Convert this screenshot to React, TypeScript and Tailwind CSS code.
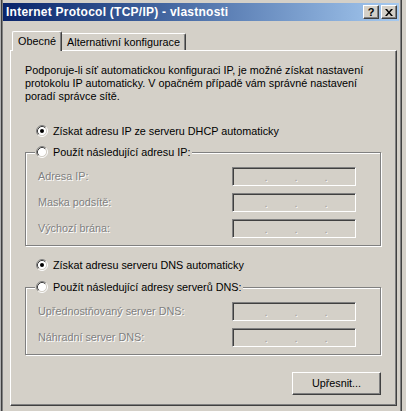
import React from 'react';

function Radio({ checked }: { checked?: boolean }) {
  return (
    <svg width="12" height="12" viewBox="0 0 12 12" className="shrink-0">
      <circle cx="6" cy="6" r="4.5" fill="#ffffff" />
      <path d="M2.11 9.89A5.5 5.5 0 0 1 9.89 2.11" fill="none" stroke="#808080" />
      <path d="M9.89 2.11A5.5 5.5 0 0 1 2.11 9.89" fill="none" stroke="#ffffff" />
      <path d="M2.82 9.18A4.5 4.5 0 0 1 9.18 2.82" fill="none" stroke="#404040" />
      <path d="M9.18 2.82A4.5 4.5 0 0 1 2.82 9.18" fill="none" stroke="#d4d0c8" />
      {checked && <circle cx="6" cy="6" r="2" fill="#000000" />}
    </svg>
  );
}

function IpField() {
  return (
    <div className="flex h-[19px] w-[124px] items-end pb-[2px] pl-[18px] border border-t-[#808080] border-l-[#808080] border-r-white border-b-white shadow-[inset_1px_1px_0_#404040] text-[#a0a0a0] [text-shadow:1px_1px_0_#fff] leading-[11px]">
      <span className="w-[30px] text-center">.</span>
      <span className="w-[30px] text-center">.</span>
      <span className="w-[30px] text-center">.</span>
    </div>
  );
}

function Row({ label }: { label: string }) {
  return (
    <div className="flex items-center justify-between">
      <span className="ml-[3px] text-[#808080] [text-shadow:1px_1px_0_#fff]">{label}</span>
      <IpField />
    </div>
  );
}

function Group({ title, rows }: { title: string; rows: string[] }) {
  return (
    <fieldset className="w-[356px] border border-[#808080] pl-[9px] pr-[24px] shadow-[inset_1px_1px_0_#fff,1px_1px_0_#fff]">
      <legend className="flex h-[14px] items-center gap-[5px] bg-[#d4d0c8] pl-[1px] pr-[2px]">
        <Radio />
        <span>{title}</span>
      </legend>
      <div className="flex flex-col gap-[7px] pt-[8px] pb-[7px]">
        {rows.map((r) => (
          <Row key={r} label={r} />
        ))}
      </div>
    </fieldset>
  );
}

export default function App() {
  return (
    <div className="flex h-[411px] w-[406px] overflow-hidden bg-[#d4d0c8] text-[10.8px] leading-[13px] text-black font-['Liberation_Sans',Arial,sans-serif]">
      <div className="flex h-full w-[3px]">
        <div className="w-px bg-[#b0b0b0]" />
        <div className="w-px bg-[#404040]" />
        <div className="w-px bg-[#808080]" />
      </div>

      <div className="flex h-full w-[399px] flex-col pt-[3px] border-r border-r-[#404040] shadow-[inset_-1px_0_0_#808080]">
        <div className="flex h-[18px] w-[396px] items-center justify-between bg-gradient-to-r from-[#0a246a] to-[#a6caf0] pl-[3px] pr-[2px]">
          <span className="font-bold text-white text-[12px] tracking-[0.25px]">Internet Protocol (TCP/IP) - vlastnosti</span>
          <div className="flex gap-[2px]">
            <div className="flex h-[14px] w-[16px] items-center justify-center bg-[#d4d0c8] border border-t-white border-l-white border-r-[#404040] border-b-[#404040] shadow-[inset_-1px_-1px_0_#808080] text-[11px] font-bold leading-none">
              ?
            </div>
            <div className="flex h-[14px] w-[16px] items-center justify-center bg-[#d4d0c8] border border-t-white border-l-white border-r-[#404040] border-b-[#404040] shadow-[inset_-1px_-1px_0_#808080]">
              <svg width="8" height="7" viewBox="0 0 8 7">
                <path d="M0 0L2 0L4 2.5L6 0L8 0L5 3.5L8 7L6 7L4 4.5L2 7L0 7L3 3.5Z" fill="#000" />
              </svg>
            </div>
          </div>
        </div>

        <div className="flex h-[19px] items-end mt-[10px] ml-[9px]">
          <div className="relative z-10 -mb-px flex h-[20px] w-[50px] items-center justify-center rounded-t-[2px] bg-[#d4d0c8] border-l border-t border-r border-l-white border-t-white border-r-[#404040] shadow-[inset_-1px_0_0_#808080] pb-[1px]">
            Obecné
          </div>
          <div className="flex h-[17px] w-[124px] items-center justify-center rounded-tr-[2px] border-t border-r border-t-white border-r-[#404040] shadow-[inset_-1px_0_0_#808080]">
            Alternativní konfigurace
          </div>
        </div>

        <div className="ml-[7px] flex h-[356px] w-[387px] flex-col border border-t-white border-l-white border-r-[#404040] border-b-[#404040] shadow-[inset_-1px_-1px_0_#808080] pl-[14px] pt-[13px]">
          <p className="whitespace-nowrap">
            Podporuje-li síť automatickou konfiguraci IP, je možné získat nastavení
            <br />
            protokolu IP automaticky. V opačném případě vám správné nastavení
            <br />
            poradí správce sítě.
          </p>

          <div className="mt-[21px] ml-[11px] flex h-[14px] items-center gap-[5px]">
            <Radio checked />
            <span>Získat adresu IP ze serveru DHCP automaticky</span>
          </div>

          <div className="mt-[7px]">
            <Group title="Použít následující adresu IP:" rows={['Adresa IP:', 'Maska podsítě:', 'Výchozí brána:']} />
          </div>

          <div className="mt-[12px] ml-[11px] flex h-[14px] items-center gap-[5px]">
            <Radio checked />
            <span>Získat adresu serveru DNS automaticky</span>
          </div>

          <div className="mt-[8px]">
            <Group title="Použít následující adresy serverů DNS:" rows={['Upřednostňovaný server DNS:', 'Náhradní server DNS:']} />
          </div>

          <div className="mt-[17px] flex w-[356px] justify-end">
            <div className="flex h-[23px] w-[89px] items-center justify-center bg-[#d4d0c8] border border-t-white border-l-white border-r-[#404040] border-b-[#404040] shadow-[inset_-1px_-1px_0_#808080]">
              Upřesnit...
            </div>
          </div>
        </div>
      </div>
    </div>
  );
}
